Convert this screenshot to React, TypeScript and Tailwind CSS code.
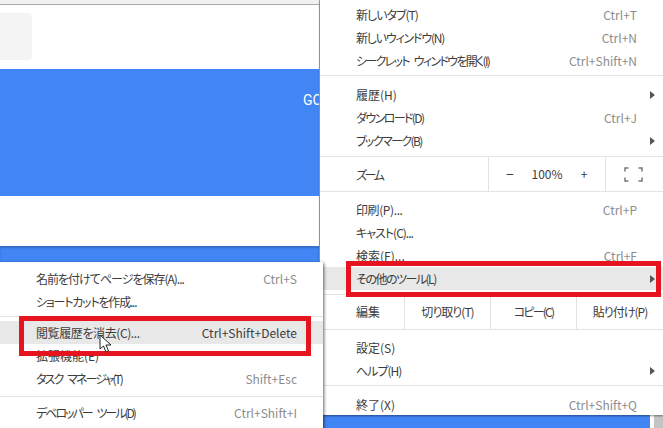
const font = { fontFamily: '"Noto Sans CJK JP", "Liberation Sans", sans-serif' };

function Arrow() {
  return <span className="absolute right-[8px] top-1/2 -translate-y-1/2 h-0 w-0 border-y-[4px] border-l-[5px] border-y-transparent border-l-[#555]"></span>;
}

function Row({ label, shortcut, arrow, active, track }: { label: string; shortcut?: string; arrow?: boolean; active?: boolean; track?: string }) {
  return (
    <div className={`relative flex h-[23px] items-center justify-between pl-[36px] pr-[26px] ${active ? "bg-[#e8e8e8]" : ""}`}>
      <span className={`text-[#3c3c3c] [word-spacing:4px] ${track || ""}`}>{label}</span>
      {shortcut && <span className={active ? "text-[#3c3c3c]" : "text-[#8c8c8c]"}>{shortcut}</span>}
      {arrow && <Arrow />}
    </div>
  );
}

function Sep({ top, bottom }: { top: string; bottom: string }) {
  return <div className={`h-px bg-[#e3e3e3] ${top} ${bottom}`}></div>;
}

function Cell({ children, className }: { children: React.ReactNode; className: string }) {
  return <div className={`flex items-center justify-center border-l border-[#e3e3e3] text-[#3c3c3c] ${className}`}>{children}</div>;
}

export default function App() {
  return (
    <div className="relative h-[428px] w-[663px] overflow-hidden bg-white text-[12px] [font-feature-settings:'palt']" style={font}>
      {/* page behind the menus */}
      <div className="w-[319px]">
        <div className="h-[5px] border-b border-[#aaa] bg-[#f1f1f1]"></div>
        <div className="h-[64px] pt-[8px]">
          <div className="h-[47px] w-[32px] rounded-r-[4px] bg-[#f4f4f4]"></div>
        </div>
        <div className="h-[127px] bg-[#4285f4] pl-[303px] pt-[22px]">
          <span className="block whitespace-nowrap text-[14px] leading-[18px] text-white" style={{ fontFamily: "Roboto, sans-serif" }}>GO</span>
        </div>
        <div className="h-[50px]"></div>
        <div className="h-[182px] bg-[#4285f4] shadow-[inset_0_2px_2px_rgba(0,0,0,0.2)]"></div>
      </div>
      <div className="absolute left-[319px] top-0 h-[415px] w-px bg-[#aaa]"></div>

      {/* what shows under the main menu */}
      <div className="absolute bottom-0 left-[320px] right-0 flex h-[13px] bg-white">
        <div className="ml-[3px] h-full w-[327px] bg-[#4285f4]"></div>
        <div className="ml-[4px] h-full w-[9px] bg-[#c4c4c4]"></div>
      </div>

      {/* main chrome menu */}
      <div className="absolute left-[320px] right-0 top-0 h-[415px] overflow-hidden bg-white pt-[3px] shadow-[0_1px_2px_rgba(0,0,0,0.45)]">
        <Row label="新しいタブ(T)" shortcut="Ctrl+T" track="tracking-[-1px]" />
        <Row label="新しいウィンドウ(N)" shortcut="Ctrl+N" track="tracking-[-1.2px]" />
        <Row label="シークレット ウィンドウを開く(I)" shortcut="Ctrl+Shift+N" track="tracking-[-1.7px]" />
        <Sep top="mt-[3px]" bottom="mb-[7px]" />
        <Row label="履歴(H)" arrow />
        <Row label="ダウンロード(D)" shortcut="Ctrl+J" track="tracking-[-1.6px]" />
        <Row label="ブックマーク(B)" arrow track="tracking-[-1.6px]" />
        <Sep top="mt-[4px]" bottom="mb-0" />
        <div className="flex h-[34px] items-center pl-[36px] text-[#3c3c3c]">
          <span className="w-[132px] pt-px tracking-[-2.5px]">ズーム</span>
          <div className="flex h-full w-[118px] items-center border-x border-[#e3e3e3]">
            <span className="w-[42px] text-center text-[14px]">−</span>
            <span className="w-[32px] text-center">100%</span>
            <span className="w-[42px] text-center">+</span>
          </div>
          <svg width="19" height="15" viewBox="0 0 19 15" className="ml-[18px]" fill="none" stroke="#777" strokeWidth="1.5">
            <path d="M1 4.5V1h3.5M14.5 1H18v3.5M18 10.5V14h-3.5M4.5 14H1v-3.5" />
          </svg>
        </div>
        <Sep top="mt-0" bottom="mb-[6px]" />
        <Row label="印刷(P)..." shortcut="Ctrl+P" track="tracking-[-0.4px]" />
        <Row label="キャスト(C)..." track="tracking-[-1px]" />
        <Row label="検索(F)..." shortcut="Ctrl+F" />
        <Row label="その他のツール(L)" arrow active track="tracking-[-1.5px]" />
        <Sep top="mt-[4px]" bottom="mb-0" />
        <div className="flex h-[34px]">
          <div className="flex w-[84px] items-center pl-[36px] text-[#3c3c3c]">編集</div>
          <Cell className="w-[86px] tracking-[-1px]">切り取り(T)</Cell>
          <Cell className="w-[86px] tracking-[-1.8px]">コピー(C)</Cell>
          <Cell className="w-[87px] tracking-[-1px]">貼り付け(P)</Cell>
        </div>
        <Sep top="mt-0" bottom="mb-[6px]" />
        <Row label="設定(S)" />
        <Row label="ヘルプ(H)" arrow track="tracking-[-1px]" />
        <Sep top="mt-[3px]" bottom="mb-[7px]" />
        <Row label="終了(X)" shortcut="Ctrl+Shift+Q" />
      </div>

      {/* submenu */}
      <div className="absolute left-0 top-[262px] h-[170px] w-[323px] bg-white pt-[5px] shadow-[1px_1px_3px_rgba(0,0,0,0.6)]">
        <Row label="名前を付けてページを保存(A)..." shortcut="Ctrl+S" track="tracking-[-1px]" />
        <Row label="ショートカットを作成..." track="tracking-[-1.2px]" />
        <Sep top="mt-[3px]" bottom="mb-[4px]" />
        <Row label="閲覧履歴を消去(C)..." shortcut="Ctrl+Shift+Delete" active track="tracking-[-0.4px]" />
        <Row label="拡張機能(E)" />
        <Row label="タスク マネージャ(T)" shortcut="Shift+Esc" track="tracking-[-1.9px]" />
        <Sep top="mt-[6px]" bottom="mb-[4px]" />
        <Row label="デベロッパー ツール(D)" shortcut="Ctrl+Shift+I" track="tracking-[-2px]" />
      </div>

      {/* red annotation frames */}
      <div className="absolute left-[346px] top-[261px] h-[36px] w-[315px] border-[5px] border-[#e5141f]"></div>
      <div className="absolute left-[19px] top-[316px] h-[40px] w-[292px] border-[5px] border-[#e5141f]"></div>

      {/* mouse pointer */}
      <svg className="absolute left-[99px] top-[334px]" width="14" height="20" viewBox="0 0 14 20">
        <path d="M1 1v14l3.5-3 2.5 6 2.5-1-2.5-6H12z" fill="#fff" stroke="#222" strokeWidth="1" strokeLinejoin="round" />
      </svg>
    </div>
  );
}
